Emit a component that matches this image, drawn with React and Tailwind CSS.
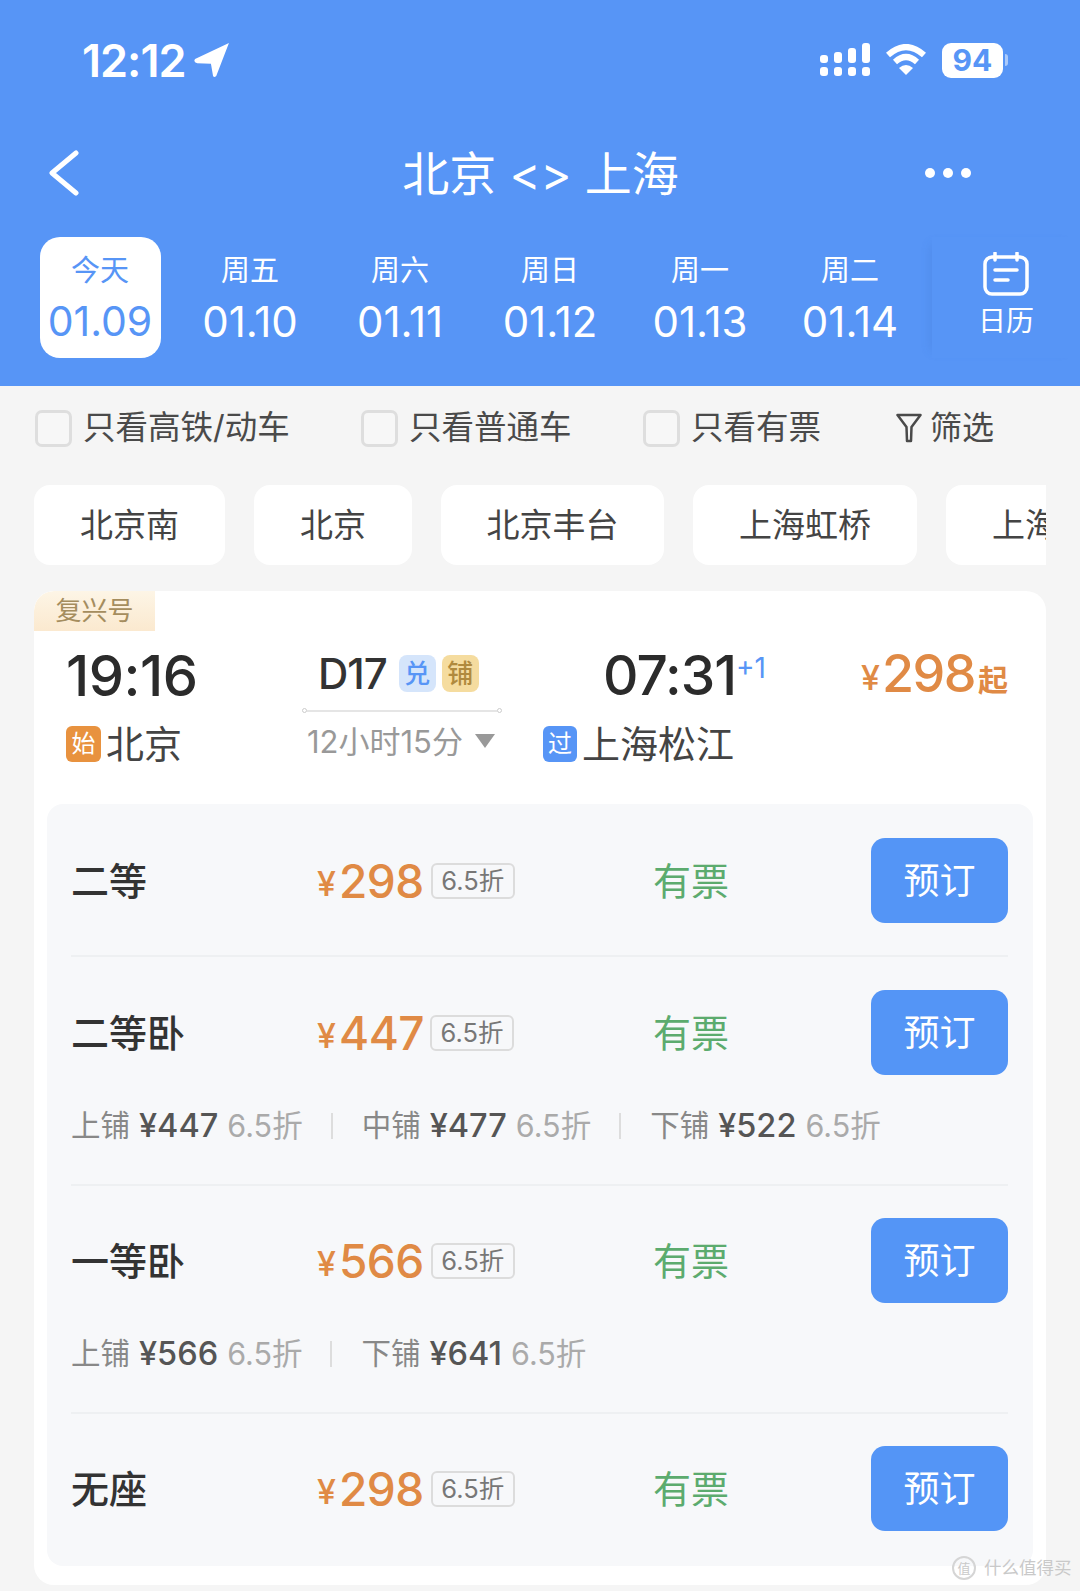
const dates = [
  ['周五', '01.10'],
  ['周六', '01.11'],
  ['周日', '01.12'],
  ['周一', '01.13'],
  ['周二', '01.14'],
];

const stations = [
  ['北京南', 'w-[191px]'],
  ['北京', 'w-[158px]'],
  ['北京丰台', 'w-[223px]'],
  ['上海虹桥', 'w-[224px]'],
  ['上海松江', 'w-[224px]'],
];

const Check = ({ label, className }) => (
  <div className={`flex items-center gap-[11px] ${className}`}>
    <div className="w-[37px] h-[37px] rounded-[7px] border-[3px] border-[#dedede] bg-[#f7f7f7]" />
    <span className="text-[32.5px] leading-none text-[#4a4a4a]">{label}</span>
  </div>
);

const Seat = ({ name, price, gap = 'ml-[7px]', subs, last }) => (
  <div className={last ? '' : 'border-b-2 border-[#eef0f2]'}>
    <div className="flex items-center h-[85px]">
      <div className="w-[246px] text-[38px] font-medium leading-none text-[#333]">{name}</div>
      <div className="flex items-center w-[336px]">
        <span className="text-[34px] font-medium text-[#e08a45] leading-none mt-[6px]">¥</span>
        <span className="text-[46px] font-medium text-[#e08a45] leading-none ml-[3px] tracking-[-0.5px]">{price}</span>
        <span className={`${gap} flex items-center justify-center w-[84px] h-[36px] rounded-[6px] border-2 border-[#dcdcdc] text-[25.5px] leading-none text-[#777]`}>6.5折</span>
      </div>
      <div className="w-[218px] text-[38px] leading-none text-[#5cab6e]">有票</div>
      <div className="flex items-center justify-center w-[137px] h-[85px] rounded-[14px] bg-[#5495f6] text-[36px] leading-none text-white">预订</div>
    </div>
    {subs ? (
      <div className="flex items-center h-[109px] pb-[7px]">
        {subs.map(([berth, fare], i) => (
          <div key={berth} className="flex items-center text-[29.5px] leading-none">
            {i > 0 && <span className="w-[2px] h-[26px] ml-[28px] mr-[29px] bg-[#dddddd]" />}
            <span className="text-[#888]">{berth}</span>
            <span className="ml-[9px] text-[32.5px] font-medium text-[#555]">¥{fare}</span>
            <span className="ml-[9px] text-[30.5px] text-[#aaa]">6.5折</span>
          </div>
        ))}
      </div>
    ) : (
      <div className="h-[32px]" />
    )}
  </div>
);

export default function App() {
  return (
    <div className="relative w-[1080px] h-[1591px] overflow-hidden bg-[#f5f5f5] font-['Inter','Noto_Sans_CJK_SC',sans-serif]">
      {/* header */}
      <div className="h-[386px] bg-[#5795f6] text-white">
        <div className="flex items-center justify-between h-[120px] pl-[82px] pr-[72px]">
          <div className="flex items-center gap-[9px]">
            <span className="text-[45px] font-semibold leading-none tracking-[-1px]">12:12</span>
            <svg width="36" height="36" viewBox="0 0 34 34" fill="white">
              <path d="M33 1 L1 16 Q-1 19 3 20 L16 20.500 L18 32 Q19 34 21 32 Z" />
            </svg>
          </div>
          <div className="flex items-center gap-[15px]">
            <svg width="50" height="34" viewBox="0 0 50 34" fill="white" className="-ml-[2px]">
              <rect x="0" y="12" width="8" height="8" rx="3" />
              <rect x="0" y="24" width="8" height="9" rx="3" />
              <rect x="14" y="9" width="8" height="11" rx="3" />
              <rect x="14" y="24" width="8" height="9" rx="3" />
              <rect x="28" y="5" width="8" height="15" rx="3" />
              <rect x="28" y="24" width="8" height="9" rx="3" />
              <rect x="42" y="0" width="8" height="20" rx="3" />
              <rect x="42" y="24" width="8" height="9" rx="3" />
            </svg>
            <svg width="42" height="32" viewBox="0 0 42 32" fill="none" stroke="white" strokeWidth="6">
              <path d="M3 11 Q21 -5 39 11" />
              <path d="M10 18 Q21 8 32 18" />
              <path d="M21 31 L14 24 Q21 18 28 24 Z" fill="white" stroke="none" />
            </svg>
            <div className="flex items-center">
              <div className="flex items-center justify-center w-[61px] h-[35px] rounded-[9px] bg-white text-[30px] font-bold leading-none text-[#5795f6]">94</div>
              <div className="w-[3px] h-[12px] ml-[2px] rounded-r-full bg-white/50" />
            </div>
          </div>
        </div>
        <div className="flex items-center justify-between h-[106px] pl-[48px] pr-[109px]">
          <svg width="32" height="46" viewBox="0 0 32 46" fill="none" stroke="white" strokeWidth="5" strokeLinecap="round" strokeLinejoin="round">
            <path d="M28 3 L4 23 L28 43" />
          </svg>
          <div className="text-[47px] leading-none ml-[76px]">北京 &lt;&gt; 上海</div>
          <div className="flex gap-[8px]">
            <span className="w-[10px] h-[10px] rounded-full bg-white" />
            <span className="w-[10px] h-[10px] rounded-full bg-white" />
            <span className="w-[10px] h-[10px] rounded-full bg-white" />
          </div>
        </div>
        <div className="flex h-[121px] mt-[11px] pl-[25px]">
          <div className="w-[150px] flex justify-center">
            <div className="flex flex-col items-center w-[121px] h-[121px] pt-[19px] rounded-[20px] bg-white text-[#5795f6]">
              <span className="text-[29px] leading-none">今天</span>
              <span className="mt-[16px] text-[41px] leading-none">01.09</span>
            </div>
          </div>
          {dates.map(([day, date]) => (
            <div key={date} className="w-[150px] flex flex-col items-center pt-[19px]">
              <span className="text-[29px] leading-none">{day}</span>
              <span className="mt-[16px] text-[42px] leading-none">{date}</span>
            </div>
          ))}
          <div className="flex flex-col items-center w-[148px] ml-[7px] pt-[15px] shadow-[-8px_0_10px_-8px_rgba(60,110,200,0.3)]">
            <svg width="46" height="44" viewBox="0 0 46 44" fill="none" stroke="white" strokeWidth="3.500" strokeLinecap="round">
              <rect x="2" y="5" width="42" height="37" rx="7" />
              <path d="M12 1 V8 M34 1 V8" />
              <path d="M12 18 H34 M12 28 H25" />
            </svg>
            <span className="mt-[11px] text-[28px] leading-none">日历</span>
          </div>
        </div>
      </div>

      {/* filters */}
      <div className="flex items-center h-[84px] pl-[35px]">
        <Check label="只看高铁/动车" className="w-[326px]" />
        <Check label="只看普通车" className="w-[282px]" />
        <Check label="只看有票" className="w-[253px]" />
        <div className="flex items-center gap-[8px]">
          <svg width="26" height="30" viewBox="0 0 26 30" fill="none" stroke="#4a4a4a" strokeWidth="2.500" strokeLinejoin="round">
            <path d="M1.500 2 H24.500 L15.500 14 L15 28 L11 28 L10.500 14 Z" />
          </svg>
          <span className="text-[32px] leading-none text-[#4a4a4a]">筛选</span>
        </div>
      </div>

      {/* stations */}
      <div className="flex gap-[29px] w-[1012px] h-[80px] mt-[15px] ml-[34px] overflow-hidden">
        {stations.map(([name, width]) => (
          <div key={name} className={`${width} shrink-0 flex items-center justify-center rounded-[16px] bg-white text-[33px] leading-none text-[#444]`}>
            {name}
          </div>
        ))}
      </div>

      {/* train card */}
      <div className="w-[1012px] h-[994px] mt-[26px] ml-[34px] rounded-[20px] bg-white overflow-hidden">
        <div className="flex items-center justify-center w-[121px] h-[40px] bg-gradient-to-b from-[#fdf5e6] to-[#fbe9cf] rounded-tl-[20px] text-[26px] leading-none text-[#a58d5e]">复兴号</div>

        <div className="flex pl-[32px] pr-[38px] h-[88px]">
          <div className="w-[236px] pt-[17px] text-[56px] font-medium leading-none text-[#2b2b2b] tracking-[-0.5px]">19:16</div>
          <div className="w-[301px]">
            <div className="flex items-center w-[200px] h-[61px] pt-[24px] pl-[16px]">
              <span className="text-[42px] font-medium leading-none text-[#333] tracking-[-1px]">D17</span>
              <span className="flex items-center justify-center w-[37px] h-[37px] ml-[12px] rounded-[8px] bg-[#d5e5fb] text-[26px] font-medium leading-none text-[#5795f6]">兑</span>
              <span className="flex items-center justify-center w-[37px] h-[37px] ml-[6px] rounded-[8px] bg-[#f5dc9f] text-[26px] font-medium leading-none text-[#b08a3e]">铺</span>
            </div>
            <div className="flex items-center w-[200px] mt-[16px]">
              <span className="w-[5px] h-[5px] rounded-full border border-[#ccc]" />
              <span className="flex-1 h-[2px] bg-[#e5e5e5]" />
              <span className="w-[5px] h-[5px] rounded-full border border-[#ccc]" />
            </div>
          </div>
          <div className="w-[165px] pt-[17px] text-[55px] font-medium leading-none text-[#2b2b2b] tracking-[-1px] whitespace-nowrap">
            07:31<span className="align-[17px] text-[28px] font-normal leading-none text-[#5795f6] tracking-normal">+1</span>
          </div>
          <div className="flex-1 flex items-center justify-end h-[80px] pt-[6px] text-[#e08a45] font-medium leading-none">
            <span className="text-[34px] mt-[8px]">¥</span>
            <span className="text-[52px] tracking-[-1.5px] ml-[2px]">298</span>
            <span className="text-[30px] font-bold mt-[12px] ml-[3px]">起</span>
          </div>
        </div>

        <div className="flex items-center pl-[32px] h-[48px] mt-[1px]">
          <div className="flex items-center w-[236px] gap-[5px]">
            <span className="flex items-center justify-center w-[35px] h-[36px] rounded-[6px] bg-[#e8923f] text-[24px] leading-none text-white">始</span>
            <span className="text-[38px] leading-none text-[#444]">北京</span>
          </div>
          <div className="flex items-center w-[241px] pl-[5px] mb-[6px]">
            <span className="text-[31px] leading-none text-[#999]">12小时15分</span>
            <span className="ml-[12px] w-0 h-0 border-x-[10px] border-x-transparent border-t-[14px] border-t-[#999]" />
          </div>
          <div className="flex items-center gap-[5px]">
            <span className="flex items-center justify-center w-[34px] h-[36px] rounded-[6px] bg-[#5795f6] text-[24px] leading-none text-white">过</span>
            <span className="text-[38px] leading-none text-[#444]">上海松江</span>
          </div>
        </div>

        {/* seats */}
        <div className="w-[986px] h-[762px] mt-[36px] ml-[13px] pt-[34px] pl-[24px] pr-[25px] rounded-[16px] bg-[#f7f8fa]">
          <Seat name="二等" price="298" />
          <div className="pt-[33px]">
            <Seat
              name="二等卧"
              price="447"
              gap="ml-[6px]"
              subs={[['上铺', '447'], ['中铺', '477'], ['下铺', '522']]}
            />
          </div>
          <div className="pt-[32px]">
            <Seat name="一等卧" price="566" subs={[['上铺', '566'], ['下铺', '641']]} />
          </div>
          <div className="pt-[32px]">
            <Seat name="无座" price="298" last />
          </div>
        </div>
      </div>

      {/* watermark */}
      <div className="absolute left-[952px] top-[1556px] flex items-center gap-[8px] text-[17.5px] leading-none text-[#c9c9c9]">
        <span className="flex items-center justify-center w-[24px] h-[24px] rounded-full border-2 border-[#d5d5d5] text-[13px] leading-none text-[#c9c9c9]">值</span>
        <span className="whitespace-nowrap">什么值得买</span>
      </div>
    </div>
  );
}
